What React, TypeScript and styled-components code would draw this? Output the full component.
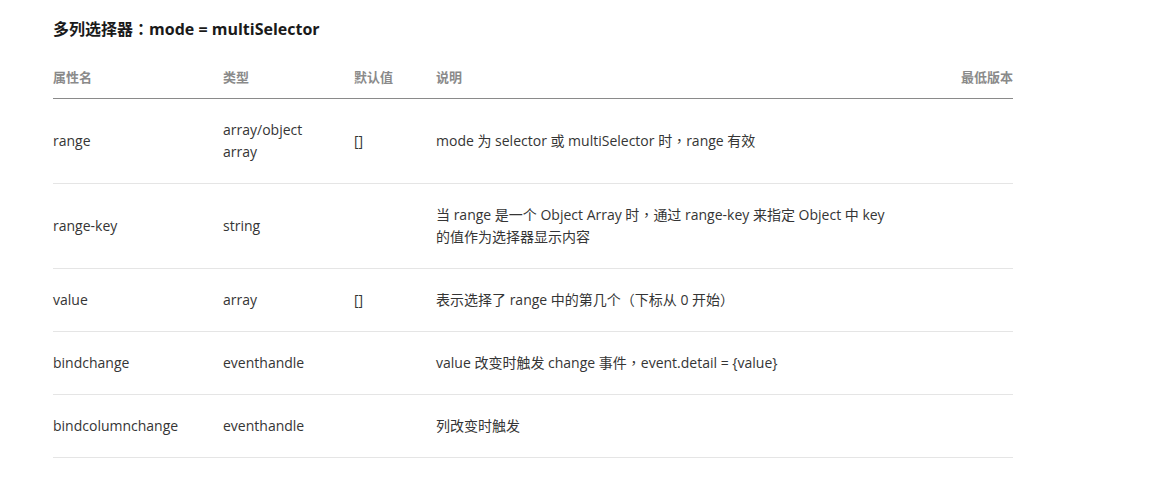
import { Fragment } from "react";
import styled, { createGlobalStyle } from "styled-components";

const GlobalStyle = createGlobalStyle`
    html, body {
        margin: 0;
        padding: 0;
        background: #fff;
    }
    body {
        font-family: "Open Sans", "Noto Sans CJK SC", sans-serif;
        color: #353535;
    }
`;

const Page = styled.div`
    padding: 17px 53px 0;
    width: 960px;
`;

const Title = styled.h3`
    font-size: 16px;
    line-height: 24px;
    font-weight: 700;
    color: #1a1a1a;
    margin: 0 0 15px;
`;

// full-width punctuation sits centred in its box, as in the original page
const Punct = styled.span`
    font-family: "Noto Sans CJK TC", sans-serif;
    line-height: 1;
`;

const Table = styled.div`
    display: grid;
    grid-template-columns: 170px 131px 82px 480px 1fr;
    font-size: 14px;
    line-height: 22px;
`;

const Head = styled.div<{ $right?: boolean }>`
    padding: 10px ${(p) => (p.$right ? "0" : "20px")} 10px 0;
    font-size: 13px;
    font-weight: 700;
    color: #8a8a8a;
    border-bottom: 1px solid #8a8a8a;
    text-align: ${(p) => (p.$right ? "right" : "left")};
`;

const Cell = styled.div`
    padding: 20px 20px 20px 0;
    border-bottom: 1px solid #e5e5e5;
    display: flex;
    align-items: center;
`;

const CellText = styled.span`
    display: block;
`;

type Row = {
    name: string;
    type: string;
    def: string;
    desc: string;
};

const rows: Row[] = [
    { name: "range", type: "array/object array", def: "[]", desc: "mode 为 selector 或 multiSelector 时，range 有效" },
    {
        name: "range-key",
        type: "string",
        def: "",
        desc: "当 range 是一个 Object Array 时，通过 range-key 来指定 Object 中 key 的值作为选择器显示内容",
    },
    { name: "value", type: "array", def: "[]", desc: "表示选择了 range 中的第几个（下标从 0 开始）" },
    { name: "bindchange", type: "eventhandle", def: "", desc: "value 改变时触发 change 事件，event.detail = {value}" },
    { name: "bindcolumnchange", type: "eventhandle", def: "", desc: "列改变时触发" },
];

const withPunct = (text: string) =>
    text.split(/([，：（）])/).map((part, i) => (i % 2 ? <Punct key={i}>{part}</Punct> : part));

export default function App() {
    return (
        <>
            <GlobalStyle />
            <Page>
                <Title>{withPunct("多列选择器：mode = multiSelector")}</Title>
                <Table>
                    <Head>属性名</Head>
                    <Head>类型</Head>
                    <Head>默认值</Head>
                    <Head>说明</Head>
                    <Head $right>最低版本</Head>
                    {rows.map((r) => (
                        <Fragment key={r.name}>
                            <Cell>{r.name}</Cell>
                            <Cell>{r.type}</Cell>
                            <Cell>{r.def}</Cell>
                            <Cell>
                                <CellText>{withPunct(r.desc)}</CellText>
                            </Cell>
                            <Cell />
                        </Fragment>
                    ))}
                </Table>
            </Page>
        </>
    );
}
